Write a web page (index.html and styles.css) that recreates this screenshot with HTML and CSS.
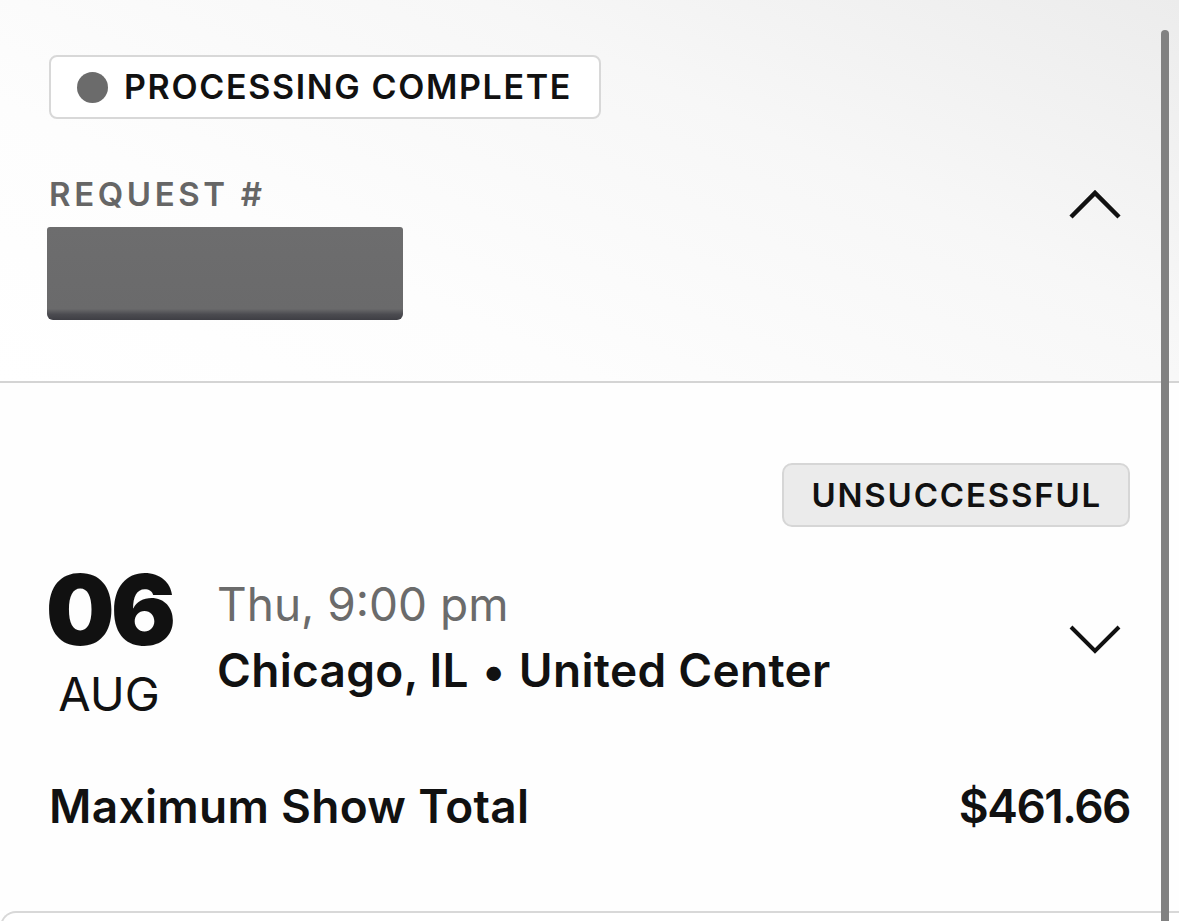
FILE: index.html
```html
<!DOCTYPE html>
<html lang="en">
<head>
<meta charset="utf-8">
<title>Request details</title>
<link rel="stylesheet" href="styles.css">
</head>
<body>
<main class="page">
  <section class="request">
    <div class="status-pill">
      <span class="status-dot"></span>
      <span class="status-text">PROCESSING COMPLETE</span>
    </div>
    <div class="request-row">
      <div class="request-info">
        <div class="request-label">REQUEST #</div>
        <div class="request-id" aria-label="hidden request number"></div>
      </div>
      <button class="toggle toggle-up" aria-label="Collapse">
        <svg width="54" height="32" viewBox="0 0 54 32"><polyline points="3,28 27,4 51,28" fill="none" stroke="#111" stroke-width="4.5"/></svg>
      </button>
    </div>
  </section>

  <section class="event">
    <div class="event-status">
      <span class="result-pill">UNSUCCESSFUL</span>
    </div>
    <div class="event-row">
      <div class="date">
        <div class="day">06</div>
        <div class="month">AUG</div>
      </div>
      <div class="event-info">
        <div class="event-time">Thu, 9:00 pm</div>
        <div class="event-place">Chicago, IL <span class="sep">•</span> United Center</div>
      </div>
      <button class="toggle toggle-down" aria-label="Expand">
        <svg width="54" height="32" viewBox="0 0 54 32"><polyline points="3,4 27,28 51,4" fill="none" stroke="#111" stroke-width="4"/></svg>
      </button>
    </div>
    <div class="total-row">
      <span class="total-label">Maximum Show Total</span>
      <span class="total-value">$461.66</span>
    </div>
  </section>

  <section class="next-card"></section>
</main>
<div class="scroll-thumb"></div>
</body>
</html>
```
FILE: styles.css
```css
* { box-sizing: border-box; }

html, body {
  margin: 0;
  height: 100%;
  overflow: hidden;
  background: #fff;
  font-family: "Inter", "Lato", "Liberation Sans", sans-serif;
  color: #111;
}

.page {
  display: flex;
  flex-direction: column;
}

/* ---- request header ---- */
.request {
  padding: 55px 49px 0 49px;
  height: 383px;
  border-bottom: 2px solid #d4d4d4;
  background: linear-gradient(205deg, #ececec 0%, #f7f7f7 35%, #fdfdfd 70%, #fff 100%);
}

.status-pill {
  display: inline-flex;
  align-items: center;
  gap: 16px;
  height: 64px;
  padding: 0 27px 0 26px;
  border: 2px solid #d8d8d8;
  border-radius: 8px;
  background: #fff;
}

.status-dot {
  width: 31px;
  height: 31px;
  border-radius: 50%;
  background: #6b6b6b;
}

.status-text {
  font-size: 34px;
  font-weight: 600;
  letter-spacing: 1.65px;
  color: #111;
  line-height: 1;
}

.request-row {
  display: flex;
  justify-content: space-between;
  align-items: flex-start;
  margin-top: 59px;
}

.request-label {
  font-size: 33px;
  font-weight: 600;
  letter-spacing: 3.6px;
  color: #666;
  line-height: 1;
}

.request-id {
  width: 356px;
  height: 93px;
  margin-top: 16px;
  margin-left: -2px;
  border-radius: 3px 3px 6px 6px;
  background: linear-gradient(to bottom, #6d6d6e 0%, #6a6a6b 88%, #4b4b50 94%, #3e3e44 100%);
}

.toggle {
  border: 0;
  padding: 0;
  background: none;
  line-height: 0;
}

.toggle-up { margin-top: 11px; margin-right: 8px; }

/* ---- event card ---- */
.event {
  padding: 80px 49px 0 49px;
  height: 528px;
  background: #fefefe;
}

.event-status {
  display: flex;
  justify-content: flex-end;
}

.result-pill {
  display: inline-flex;
  align-items: center;
  height: 64px;
  padding: 0 26px 0 27px;
  border: 2px solid #d6d6d6;
  border-radius: 10px;
  background: #ebebeb;
  font-size: 33px;
  font-weight: 600;
  letter-spacing: 1.8px;
  line-height: 1;
  color: #111;
}

.event-row {
  display: flex;
  align-items: flex-start;
  margin-top: 34px;
}

.date {
  width: 120px;
  display: flex;
  flex-direction: column;
  align-items: center;
}

.day {
  font-size: 97px;
  font-weight: 900;
  letter-spacing: -4px;
  line-height: 1;
  color: #111;
}

.month {
  font-size: 47px;
  font-weight: 400;
  line-height: 1;
  margin-top: 12px;
  color: #111;
}

.event-info {
  flex: 1;
  margin-left: 48px;
  margin-top: 20px;
}

.event-time {
  font-size: 46px;
  font-weight: 400;
  color: #6b6b6b;
  line-height: 1;
}

.event-place {
  font-size: 46px;
  font-weight: 600;
  letter-spacing: 0.3px;
  color: #111;
  line-height: 1;
  margin-top: 20px;
}

.sep { font-weight: 400; }

.toggle-down { margin-top: 62px; margin-right: 8px; }

.total-row {
  display: flex;
  justify-content: space-between;
  align-items: baseline;
  margin-top: 66px;
}

.total-label,
.total-value {
  font-size: 46px;
  font-weight: 600;
  line-height: 1;
  color: #111;
}

.total-label { letter-spacing: 0.3px; }
.total-value { letter-spacing: -1.5px; }

/* ---- following card edge ---- */
.next-card {
  height: 40px;
  border-top: 2px solid #d8d8d8;
  border-left: 2px solid #d8d8d8;
  border-top-left-radius: 16px;
  background: #fff;
}

/* overlay scroll indicator */
.scroll-thumb {
  position: absolute;
  top: 30px;
  left: 1161px;
  width: 8px;
  height: 900px;
  border-radius: 4px;
  background: #818181;
}
```
